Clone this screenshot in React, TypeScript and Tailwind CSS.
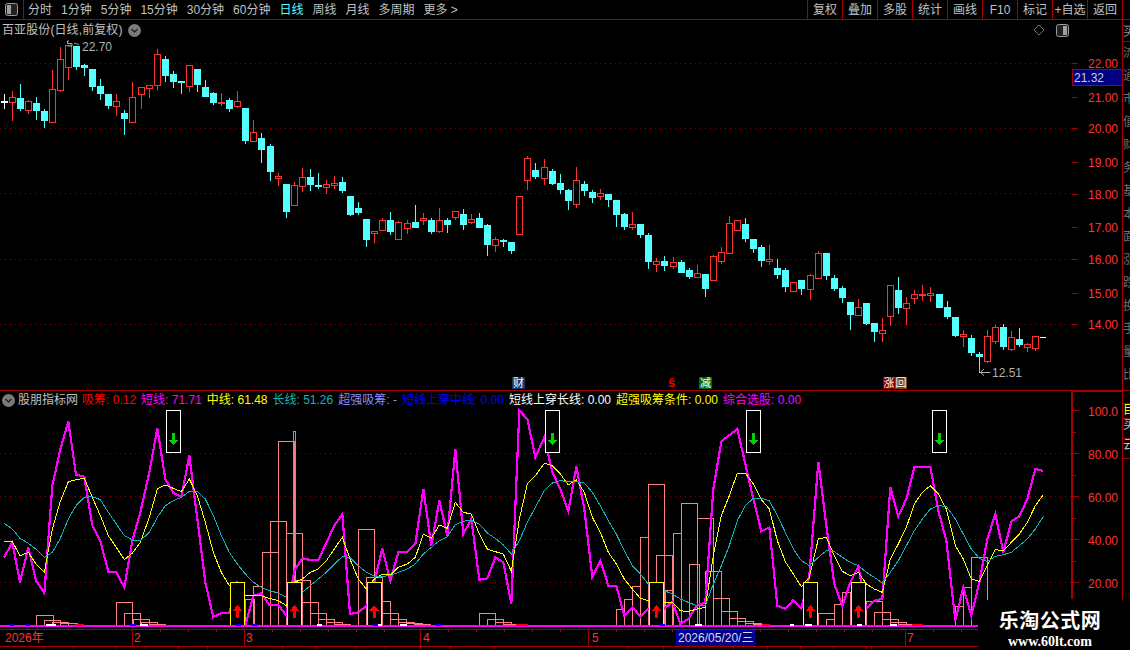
import clsx from "clsx";

const RED = "#ff3232";
const LINE = "#a80000";
const cjk = "font-['Liberation_Sans','Noto_Sans_CJK_SC',sans-serif]";

type C = [number, number, number, number, number];

// [red?, wick top, body top, body bottom, wick bottom], read off the picture in 3x units
const segA: C[] = [
  [2, 190, 213, 216, 233], [1, 180, 202, 215, 270], [0, 160, 205, 234, 240], [1, 208, 214, 240, 248],
  [0, 198, 220, 240, 267], [0, 235, 243, 270, 291], [1, 118, 178, 275, 275], [1, 48, 88, 179, 183],
  [1, 42, 46, 110, 147], [0, 47, 48, 108, 117], [0, 100, 105, 110, 135], [0, 117, 117, 168, 180],
  [0, 145, 168, 189, 207], [0, 189, 192, 225, 233], [1, 189, 214, 227, 255], [0, 238, 249, 264, 312],
  [1, 153, 202, 275, 275], [1, 171, 172, 191, 234], [1, 162, 166, 173, 201], [1, 54, 73, 164, 177],
  [0, 75, 87, 135, 153], [0, 120, 132, 153, 171], [0, 150, 153, 156, 189], [1, 102, 106, 167, 183],
  [0, 117, 117, 162, 183], [0, 147, 171, 198, 198], [0, 183, 189, 216, 222], [1, 186, 216, 219, 225],
  [0, 201, 210, 234, 243], [1, 180, 214, 227, 231], [0, 234, 234, 330, 339], [1, 267, 307, 333, 333],
  [0, 306, 324, 357, 396], [0, 339, 348, 423, 450], [1, 426, 438, 443, 465], [0, 460, 462, 543, 561],
  [1, 453, 466, 525, 525], [1, 411, 441, 467, 483], [0, 414, 441, 462, 480], [0, 426, 466, 469, 474],
  [1, 447, 463, 470, 489], [1, 435, 460, 464, 473], [0, 438, 456, 480, 486],
];
const segB: C[] = [
  [0, 135, 138, 192, 195], [0, 153, 174, 186, 192], [0, 204, 207, 267, 288], [1, 240, 243, 248, 276],
  [1, 201, 211, 240, 240], [0, 183, 210, 243, 252], [1, 210, 217, 267, 267], [1, 207, 220, 233, 249],
  [0, 162, 216, 231, 231], [1, 186, 204, 210, 222], [0, 201, 210, 243, 249], [1, 171, 211, 242, 246],
  [0, 201, 210, 222, 246], [1, 180, 184, 201, 207], [0, 174, 192, 222, 237], [1, 189, 208, 215, 219],
  [0, 186, 204, 231, 231], [0, 219, 225, 282, 315], [1, 258, 268, 285, 303], [0, 264, 270, 273, 288],
  [0, 273, 276, 300, 309], [1, 138, 139, 251, 252], [1, 15, 25, 89, 117], [0, 36, 60, 78, 84],
  [1, 24, 52, 83, 102], [0, 54, 63, 99, 102], [0, 69, 99, 117, 129], [0, 114, 120, 150, 177],
  [1, 48, 91, 161, 171], [0, 90, 102, 120, 135], [0, 117, 126, 141, 156], [1, 114, 130, 137, 147],
  [0, 129, 132, 147, 168], [0, 150, 150, 192, 228], [0, 186, 192, 228, 237], [1, 183, 223, 231, 237],
  [0, 219, 222, 252, 261], [0, 246, 255, 333, 354], [1, 321, 334, 341, 363], [0, 315, 333, 345, 360],
  [1, 318, 337, 347, 354], [0, 327, 336, 366, 366], [0, 351, 360, 378, 384], [1, 342, 370, 381, 381],
];
const segC: C[] = [
  [0, 222, 222, 264, 288], [1, 162, 169, 239, 240], [1, 138, 157, 182, 189], [1, 45, 70, 158, 159],
  [1, 61, 61, 89, 89], [0, 51, 72, 114, 123], [0, 117, 117, 144, 156], [0, 132, 141, 180, 198],
  [1, 132, 177, 182, 192], [0, 174, 204, 222, 234], [0, 201, 210, 258, 273], [1, 246, 246, 272, 272],
  [0, 240, 240, 264, 282], [1, 219, 226, 266, 297], [1, 150, 160, 233, 234], [0, 159, 159, 225, 237],
  [0, 222, 234, 264, 270], [0, 255, 264, 291, 306], [0, 306, 306, 342, 387], [1, 294, 322, 344, 345],
  [0, 309, 309, 369, 372], [0, 366, 369, 393, 423], [1, 351, 391, 398, 423], [1, 255, 256, 347, 375],
  [0, 228, 270, 321, 339], [1, 288, 310, 323, 372], [1, 267, 283, 293, 309], [1, 252, 282, 285, 300],
  [1, 258, 280, 285, 303], [0, 282, 282, 321, 321], [0, 300, 321, 348, 354], [0, 351, 351, 405, 408],
  [1, 387, 403, 408, 438], [0, 402, 414, 456, 465], [0, 453, 462, 468, 516], [1, 387, 408, 482, 486],
  [1, 372, 382, 423, 429], [0, 369, 381, 438, 447], [1, 390, 412, 446, 450], [0, 381, 417, 432, 438],
  [1, 426, 433, 442, 453], [1, 408, 409, 443, 450],
];

const candles = [
  ...segA.map((c) => ({ c, base: 30 })),
  ...segB.map((c) => ({ c, base: 150 })),
  ...segC.map((c) => ({ c, base: 200 })),
];

const drift = [17, 33, 50, 67, 83, 100, 116];
const candleX = (i: number) => 4.5 + 8 * i + drift.filter((d) => i >= d).length;
const py = (base: number, z: number) => Math.round(base + z / 3) + 0.5;

const Candles = () => (
  <g shapeRendering="crispEdges">
    {candles.map(({ c, base }, i) => {
      const [kind, wt, bt, bb, wb] = c;
      const x = candleX(i);
      const color = kind === 1 ? RED : kind === 2 ? "#ffffff" : "#54ffff";
      const top = py(base, bt);
      const bottom = py(base, bb);
      return (
        <g key={i}>
          <line x1={x} x2={x} y1={py(base, wt)} y2={py(base, wb)} stroke={color} />
          {kind === 1 ? (
            <rect x={x - 3} y={top} width={6} height={bottom - top} fill="#000" stroke={color} />
          ) : (
            <rect x={x - 3.5} y={top - 0.5} width={7} height={bottom - top + 1} fill={color} />
          )}
        </g>
      );
    })}
    <line x1={1040} x2={1046} y1={337.5} y2={337.5} stroke="#fff" />
  </g>
);

type P = [number, number];
const toPts = (base: number, pts: P[]) => pts.map(([x, y]) => `${base + x / 3},${410 + y / 3}`).join(" ");
const series = (a: P[], b: P[], c: P[]) => `${toPts(0, a)} ${toPts(350, b)} ${toPts(700, c)}`;

const magenta = series(
  [[12, 445], [37, 400], [60, 520], [85, 415], [108, 515], [133, 552], [157, 230], [180, 125], [205, 38], [228, 197], [253, 203], [277, 350], [301, 395], [325, 489], [349, 490], [373, 535], [397, 395], [421, 310], [448, 190], [472, 58], [496, 210], [520, 252], [544, 263], [568, 140], [592, 330], [616, 520], [640, 625], [664, 612], [688, 611], [712, 518], [736, 650], [760, 560], [784, 553], [808, 588], [835, 588], [859, 620], [883, 485], [907, 448], [931, 453], [955, 453], [1003, 350], [1027, 315], [1050, 615]],
  [[25, 610], [50, 590], [73, 520], [97, 418], [121, 515], [145, 430], [172, 428], [196, 405], [220, 240], [244, 410], [268, 275], [292, 380], [316, 120], [340, 375], [364, 330], [388, 512], [412, 508], [436, 445], [460, 460], [484, 585], [508, 5], [532, 30], [556, 145], [583, 85], [607, 190], [631, 240], [655, 307], [679, 173], [703, 300], [727, 505], [751, 455], [775, 530], [799, 530], [823, 620], [847, 595], [871, 622], [895, 600], [919, 610], [943, 600], [967, 577], [991, 645], [1015, 630], [1040, 590]],
  [[16, 580], [40, 240], [64, 97], [112, 60], [136, 165], [160, 270], [184, 367], [208, 355], [232, 590], [256, 600], [280, 573], [304, 598], [328, 500], [355, 158], [379, 350], [403, 525], [427, 590], [451, 520], [475, 472], [499, 600], [523, 575], [547, 570], [571, 235], [595, 322], [619, 270], [643, 175], [691, 173], [715, 305], [739, 395], [766, 635], [790, 535], [814, 620], [838, 520], [862, 390], [886, 315], [910, 430], [934, 337], [958, 322], [982, 270], [1006, 180], [1030, 186]],
);
const yellow = series(
  [[12, 398], [37, 398], [60, 440], [85, 430], [108, 465], [133, 490], [157, 360], [180, 280], [205, 218], [228, 212], [253, 208], [277, 265], [301, 320], [325, 380], [349, 415], [373, 452], [397, 432], [421, 400], [448, 325], [472, 240], [496, 228], [520, 238], [544, 248], [568, 210], [592, 260], [616, 340], [640, 430], [664, 490], [688, 530], [736, 558], [760, 558], [784, 560], [808, 568], [835, 575], [859, 590], [883, 520], [907, 510], [931, 490], [955, 480], [979, 455], [1003, 420], [1027, 385], [1050, 450]],
  [[25, 510], [49, 540], [73, 510], [97, 495], [121, 498], [145, 475], [172, 465], [196, 445], [220, 375], [244, 387], [268, 348], [292, 358], [316, 280], [340, 310], [364, 315], [388, 375], [412, 420], [436, 428], [460, 435], [484, 487], [508, 330], [532, 225], [556, 200], [583, 163], [607, 170], [631, 195], [655, 228], [679, 212], [703, 250], [727, 325], [751, 370], [775, 430], [799, 465], [823, 510], [847, 540], [871, 568], [895, 575], [919, 575], [943, 580], [967, 580], [991, 605], [1015, 608], [1040, 600]],
  [[16, 595], [40, 440], [64, 320], [88, 260], [112, 193], [136, 193], [160, 225], [184, 272], [208, 300], [232, 395], [256, 458], [280, 495], [304, 533], [328, 505], [355, 390], [379, 385], [403, 440], [427, 487], [451, 500], [475, 490], [499, 525], [523, 540], [547, 550], [571, 450], [595, 405], [619, 355], [643, 285], [667, 250], [691, 230], [715, 255], [739, 300], [766, 410], [790, 450], [814, 510], [838, 517], [862, 470], [886, 422], [910, 425], [934, 400], [958, 375], [982, 340], [1006, 290], [1030, 257]],
);
const teal = series(
  [[12, 343], [37, 360], [60, 388], [85, 403], [108, 420], [133, 445], [157, 430], [180, 390], [205, 330], [228, 290], [253, 265], [277, 263], [301, 272], [325, 310], [349, 345], [373, 380], [397, 393], [421, 395], [448, 370], [472, 325], [496, 290], [520, 275], [544, 265], [568, 247], [592, 247], [616, 270], [640, 320], [664, 380], [688, 430], [712, 465], [736, 495], [760, 520], [784, 535], [808, 545], [835, 552], [859, 565], [883, 550], [907, 550], [931, 530], [955, 510], [979, 490], [1003, 465], [1027, 443], [1050, 445]],
  [[25, 470], [49, 490], [73, 502], [97, 502], [121, 500], [145, 490], [172, 480], [196, 465], [220, 435], [244, 415], [268, 395], [292, 383], [316, 347], [340, 337], [364, 333], [388, 345], [412, 372], [436, 388], [460, 408], [484, 435], [508, 395], [532, 340], [556, 295], [583, 245], [607, 222], [631, 215], [655, 218], [679, 218], [703, 222], [727, 250], [751, 290], [775, 335], [799, 375], [823, 425], [847, 470], [871, 495], [895, 525], [919, 535], [943, 545], [967, 555], [991, 570], [1015, 580], [1040, 590]],
  [[16, 590], [40, 525], [64, 470], [88, 410], [112, 335], [136, 290], [160, 268], [184, 268], [208, 275], [232, 320], [256, 370], [280, 420], [304, 455], [328, 470], [355, 445], [379, 425], [403, 428], [427, 445], [451, 460], [475, 470], [499, 490], [523, 505], [547, 522], [571, 490], [595, 455], [619, 410], [643, 365], [667, 330], [691, 300], [715, 290], [739, 292], [766, 330], [790, 375], [814, 420], [838, 448], [862, 458], [886, 442], [910, 437], [934, 430], [958, 410], [982, 390], [1006, 360], [1030, 322]],
);

// salmon outline bars: [page base, left, right, top]
const bars: [number, number, number, number][] = [
  [0, 108, 158, 618], [0, 133, 182, 634], [0, 157, 206, 640], [0, 180, 230, 643],
  [0, 349, 398, 580], [0, 373, 422, 613], [0, 400, 448, 630], [0, 424, 472, 640], [0, 448, 496, 645],
  [0, 734, 760, 571], [0, 760, 788, 530], [0, 787, 835, 430], [0, 811, 859, 337], [0, 835, 883, 97],
  [0, 859, 907, 373], [0, 883, 931, 512], [0, 907, 955, 580], [0, 931, 979, 613], [0, 955, 1003, 631],
  [0, 979, 1027, 640], [0, 1003, 1050, 645],
  [350, 25, 73, 361], [350, 49, 97, 505], [350, 73, 121, 577], [350, 97, 145, 613], [350, 121, 169, 631],
  [350, 145, 193, 640], [350, 169, 217, 643], [350, 193, 241, 646],
  [350, 388, 436, 613], [350, 412, 460, 631], [350, 436, 484, 640], [350, 460, 508, 645],
  [350, 799, 823, 600], [350, 823, 847, 571], [350, 847, 871, 532], [350, 871, 895, 385], [350, 895, 943, 226],
  [350, 919, 967, 439], [350, 970, 994, 373], [350, 945, 970, 544], [350, 994, 1042, 283], [350, 1018, 1048, 466], [350, 1042, 1090, 328],
  [700, 16, 64, 487], [700, 40, 88, 568], [700, 64, 112, 607], [700, 88, 136, 628], [700, 112, 160, 637],
  [700, 136, 184, 643], [700, 160, 208, 646],
  [700, 355, 403, 613], [700, 379, 403, 631], [700, 403, 427, 586], [700, 427, 451, 550], [700, 451, 499, 600],
  [700, 499, 547, 575], [700, 523, 571, 610], [700, 547, 595, 631], [700, 571, 619, 640], [700, 595, 643, 645], [700, 619, 667, 646],
  [700, 766, 790, 590], [700, 790, 814, 535], [700, 814, 862, 445],
];

const upBoxes = [230, 287, 366.5, 649, 803, 851];
const downBoxes = [166, 545, 746, 932];

const ticks: [string, number, number][] = [
  ["#0000ff", 10, 14], ["#0000ff", 26, 30], ["#ff0000", 75, 84], ["#ffffff", 46, 56], ["#ffffff", 140, 148], ["#0000ff", 130, 136],
  ["#0000ff", 236, 241], ["#0000ff", 252, 257], ["#ffffff", 317, 322], ["#ffffff", 375, 382], ["#0000ff", 373, 378], ["#0000ff", 436, 441],
  ["#ffffff", 400, 407], ["#ffffff", 518, 522], ["#ff0000", 516, 528], ["#0000ff", 660, 665], ["#ffffff", 695, 702], ["#ffffff", 805, 812],
  ["#ffffff", 857, 862], ["#ffffff", 890, 897], ["#ff0000", 912, 923], ["#ffffff", 790, 794], ["#ff0000", 762, 770],
];

const UpperChart = () => (
  <svg width={1071} height={371} viewBox="0 20 1071 371" className="absolute left-0 top-0">
    {[63.5, 128.5, 193.5, 259.5, 324.5].map((y) => (
      <line key={y} x1={0} x2={1071} y1={y} y2={y} stroke="#900000" strokeDasharray="1 4" shapeRendering="crispEdges" />
    ))}
    <Candles />
    <g stroke="#b0b0b0" fill="none">
      <path d="M69 41h-1.5v2.5h4.5v2.5h-4.5M74 44c2-2 3 1 5 0" />
      <path d="M979.5 366v6.5h11M984 369l-3.5 3.5 3.5 3" />
    </g>
  </svg>
);

const LowerChart = () => (
  <svg width={1071} height={238} viewBox="0 392 1071 238" className="absolute left-0 top-0">
    {[454.5, 497.5, 540.5, 583.5].map((y) => (
      <line key={y} x1={0} x2={1071} y1={y} y2={y} stroke="#900000" strokeDasharray="1 4" shapeRendering="crispEdges" />
    ))}
    <g shapeRendering="crispEdges" fill="none">
      {bars.map(([base, l, r, top], i) => (
        <rect key={i} x={Math.round(base + l / 3) + 0.5} y={Math.round(410 + top / 3) + 0.5} width={Math.round((r - l) / 3)} height={Math.max(1, 626 - Math.round(410 + top / 3))} stroke="#ff8080" />
      ))}
      <rect x={293.5} y={432.5} width={2} height={194} stroke="#8c8cff" />
      <polyline points={magenta} stroke="#ff00ff" strokeWidth={2.2} />
      <polyline points={yellow} stroke="#ffff00" />
      <polyline points={teal} stroke="#14b4b4" />
      {upBoxes.map((x) => (
        <g key={x}>
          <rect x={x + 0.5} y={583.5} width={14} height={43} fill="#000" stroke="#ffff00" />
          <path d={`M${x + 7.5} 606l-5 6h3.5v6.5h3v-6.5h3.5z`} fill="#ff0000" />
        </g>
      ))}
      {downBoxes.map((x) => (
        <g key={x}>
          <rect x={x + 0.5} y={411.5} width={14} height={42} fill="#000" stroke="#ffffff" />
          <path d={`M${x + 6} 434h3v6.5h3.5l-5 6-5-6h3.5z`} fill="#00d200" />
        </g>
      ))}
      <line x1={0} x2={1071} y1={626.5} y2={626.5} stroke="#ff00ff" strokeWidth={2} />
      {ticks.map(([color, a, b], i) => (
        <line key={i} x1={a} x2={b} y1={625.5} y2={625.5} stroke={color} strokeWidth={2} />
      ))}
    </g>
  </svg>
);

const ChevronCircle = () => (
  <svg width={13} height={13} viewBox="0 0 13 13" className="shrink-0">
    <circle cx={6.5} cy={6.5} r={6.5} fill="#7a7a7a" />
    <path d="M3.5 5l3 3 3-3" fill="none" stroke="#222" strokeWidth={1.4} />
  </svg>
);

const HalfBox = ({ fillLeft }: { fillLeft?: boolean }) => (
  <svg width={13} height={13} viewBox="0 0 13 13" className="shrink-0">
    <rect x={0.5} y={0.5} width={12} height={12} rx={2} fill="#222" stroke="#9a9a9a" />
    <rect x={fillLeft ? 2 : 7} y={2} width={4} height={9} fill="#a0a0a0" />
  </svg>
);

const upperLabels: [string, number][] = [
  ["22.00", 63], ["21.00", 97], ["20.00", 128], ["19.00", 162], ["18.00", 194],
  ["17.00", 227], ["16.00", 259], ["15.00", 293], ["14.00", 324],
];
const lowerLabels: [string, number][] = [["100.0", 412], ["80.00", 455], ["60.00", 498], ["40.00", 541], ["20.00", 584]];

const UpperAxis = () => (
  <svg width={51} height={371} viewBox="1071 20 51 371" className="block">
    {upperLabels.map(([t, y]) => (
      <g key={t}>
        <line x1={1072} x2={1078} y1={y + 0.5} y2={y + 0.5} stroke={LINE} shapeRendering="crispEdges" />
        <text x={1118} y={y + 4.5} textAnchor="end" fill={RED} fontSize={12} className={cjk}>{t}</text>
      </g>
    ))}
    <rect x={1072.5} y={69.5} width={50} height={16} fill="#000080" stroke={LINE} shapeRendering="crispEdges" />
    <text x={1074} y={81.5} fill="#c8c8e8" fontSize={12} className={cjk}>21.32</text>
  </svg>
);

const LowerAxis = () => (
  <svg width={51} height={208} viewBox="1071 392 51 208" className="block">
    <line x1={1072} x2={1072} y1={392} y2={600} stroke={LINE} strokeWidth={2} shapeRendering="crispEdges" />
    <line x1={1071} x2={1122} y1={392.5} y2={392.5} stroke={LINE} shapeRendering="crispEdges" />
    {lowerLabels.map(([t, y]) => (
      <g key={t}>
        <line x1={1073} x2={1079} y1={y - 0.5} y2={y - 0.5} stroke={LINE} shapeRendering="crispEdges" />
        <line x1={1073} x2={1076} y1={y + 21} y2={y + 21} stroke={LINE} shapeRendering="crispEdges" />
        <text x={1118} y={y + 4.5} textAnchor="end" fill={RED} fontSize={12} className={cjk}>{t}</text>
      </g>
    ))}
  </svg>
);

const DateAxis = () => (
  <svg width={1071} height={20} viewBox="0 630 1071 20" className="block">
    <g shapeRendering="crispEdges" stroke={LINE}>
      <line x1={0} x2={1071} y1={630.5} y2={630.5} />
      <line x1={0} x2={1071} y1={647.5} y2={647.5} />
      {[132, 244, 420, 588, 905].map((x) => (
        <line key={x} x1={x + 0.5} x2={x + 0.5} y1={630} y2={647} />
      ))}
      {[160, 188, 216, 272, 300, 328, 356, 384, 448, 476, 504, 532, 560, 616, 644, 672, 760, 788, 816, 844, 872, 933, 961].map((x) => (
        <line key={x} x1={x + 0.5} x2={x + 0.5} y1={630} y2={633} />
      ))}
      {[43, 73, 115, 145, 178, 207, 241, 282, 316, 356, 385, 420, 450, 494, 628, 663, 699, 733, 767, 800, 833, 866, 871].map((x) => (
        <line key={x} x1={x + 0.5} x2={x + 0.5} y1={647} y2={650} />
      ))}
    </g>
    <g fill={RED} fontSize={12} className={cjk}>
      <text x={5} y={643}>2026年</text>
      <text x={134} y={643}>2</text>
      <text x={246} y={643}>3</text>
      <text x={423} y={643}>4</text>
      <text x={592} y={643}>5</text>
      <text x={907} y={643}>7</text>
    </g>
    <rect x={676.5} y={631.5} width={78} height={15} fill="#000080" stroke="#0000c0" shapeRendering="crispEdges" />
    <text x={678} y={643} fill="#d8d8ff" fontSize={12} className={cjk}>2026/05/20/三</text>
  </svg>
);

const Legend = ({ label, value, color }: { label: string; value: string; color: string }) => (
  <span className={clsx("whitespace-nowrap", color)}>
    {label}: {value}
  </span>
);

const Toolbar = () => (
  <div className="flex h-[20px] shrink-0 items-center border-b border-[#a80000] text-[12px] text-[#c0c0c0]">
    <div className="flex h-full w-[24px] shrink-0 items-center justify-center border-r border-[#a80000]">
      <HalfBox fillLeft />
    </div>
    <div className="ml-[4px] flex gap-[9px]">
      {["分时", "1分钟", "5分钟", "15分钟", "30分钟", "60分钟"].map((t) => (
        <span key={t}>{t}</span>
      ))}
      <span className="text-[#54ffff]">日线</span>
      {["周线", "月线", "多周期", "更多 >"].map((t) => (
        <span key={t}>{t}</span>
      ))}
    </div>
    <div className="ml-auto flex h-full">
      {["复权", "叠加", "多股", "统计", "画线", "F10", "标记", "+自选", "返回"].map((t) => (
        <span key={t} className="flex h-full w-[35px] items-center justify-center whitespace-nowrap border-l border-[#a80000]">
          {t}
        </span>
      ))}
      <span className="w-[8px] border-l border-[#a80000]" />
    </div>
  </div>
);

// clipped column at the right edge of the window, only the left part of each glyph shows
const SideColumn = ({ rows }: { rows: { h: number; text: string; color: string; leading: string }[] }) => (
  <div className="flex-1 overflow-hidden border-l border-[#a80000]">
    {rows.map((r, i) => (
      <div key={i} className={clsx("overflow-hidden border-b border-[#a80000] text-[12px]", r.leading, r.color)} style={{ height: r.h }}>
        {r.text}
      </div>
    ))}
  </div>
);

const topSide = [
  { h: 6, text: "", color: "", leading: "leading-[13px]" },
  { h: 16, text: "买", color: "text-[#909090]", leading: "leading-[13px]" },
  { h: 349, text: "流通市值财务基本面涨跌换手量比", color: "text-[#707070]", leading: "leading-[23px]" },
];
const bottomSide = [
  { h: 13, text: "", color: "", leading: "leading-[13px]" },
  { h: 15, text: "目", color: "text-[#ffff00]", leading: "leading-[13px]" },
  { h: 20, text: "买", color: "text-[#c0c0c0]", leading: "leading-[13px]" },
  { h: 20, text: "云", color: "text-[#c0c0c0]", leading: "leading-[13px]" },
];

export default function App() {
  return (
    <div className={clsx("relative flex h-[650px] w-[1130px] flex-col overflow-hidden bg-black", cjk)}>
      <Toolbar />
      <div className="flex h-[371px] shrink-0 border-b border-[#a80000]">
        <div className="relative h-[371px] w-[1071px] shrink-0">
          <UpperChart />
          <div className="relative flex h-[20px] items-center gap-[5px] pl-[2px] text-[12px] text-[#c0c0c0]">
            <span className="tracking-[0.1px]">百亚股份(日线,前复权)</span>
            <ChevronCircle />
            <svg width={12} height={12} viewBox="0 0 12 12" className="ml-auto">
              <path d="M6 1l5 5-5 5-5-5z" fill="none" stroke="#777" />
            </svg>
            <div className="ml-[6px] mr-[2px]">
              <HalfBox />
            </div>
          </div>
          <span className="absolute left-[82px] top-[18px] text-[12px] text-[#b0b0b0]">22.70</span>
          <span className="absolute left-[992px] top-[344px] text-[12px] text-[#b0b0b0]">12.51</span>
          <span className="absolute left-[512px] top-[357px] flex h-[12px] w-[13px] items-center justify-center bg-[#0a3a6a] text-[11px] text-white">财</span>
          <span className="absolute left-[668px] top-[356px] text-[13px] font-bold leading-[14px] text-[#ff0000]">ŝ</span>
          <span className="absolute left-[699px] top-[357px] flex h-[12px] w-[13px] items-center justify-center bg-[#006a10] text-[11px] text-white">减</span>
          <span className="absolute left-[883px] top-[357px] flex h-[12px] w-[12px] items-center justify-center bg-[#800000] text-[11px] text-white">涨</span>
          <span className="absolute left-[895px] top-[357px] flex h-[12px] w-[12px] items-center justify-center bg-[#804000] text-[11px] text-white">回</span>
        </div>
        <div className="w-[51px] shrink-0">
          <UpperAxis />
        </div>
        <SideColumn rows={topSide} />
      </div>
      <div className="flex min-h-0 flex-1">
        <div className="flex w-[1071px] shrink-0 flex-col">
          <div className="relative h-[238px] shrink-0">
            <LowerChart />
            <div className="relative flex h-[18px] items-center gap-[5px] pl-[2px] text-[12px] whitespace-nowrap">
              <ChevronCircle />
              <span className="ml-[-2px] mr-[-1px] text-[#c0c0c0]">股朋指标网</span>
              <Legend label="吸筹" value="0.12" color="text-[#ff0000]" />
              <Legend label="短线" value="71.71" color="text-[#ff00ff]" />
              <Legend label="中线" value="61.48" color="text-[#ffff00]" />
              <Legend label="长线" value="51.26" color="text-[#14b4b4]" />
              <Legend label="超强吸筹" value="-" color="text-[#8c8cff]" />
              <Legend label="短线上穿中线" value="0.00" color="text-[#0000ff]" />
              <Legend label="短线上穿长线" value="0.00" color="text-white" />
              <Legend label="超强吸筹条件" value="0.00" color="text-[#ffff00]" />
              <Legend label="综合选股" value="0.00" color="text-[#ff00ff]" />
            </div>
          </div>
          <DateAxis />
        </div>
        <div className="w-[51px] shrink-0">
          <LowerAxis />
        </div>
        <SideColumn rows={bottomSide} />
      </div>
      {/* watermark sits over the corner of the chart */}
      <div className="absolute bottom-0 right-0 flex h-[50px] w-[152px] flex-col items-center bg-black pr-[8px] pt-[9px] text-white">
        <span className="text-[20px] font-bold leading-[24px] tracking-[0.5px]">乐淘公式网</span>
        <span className="font-['Liberation_Serif',serif] text-[14px] font-bold leading-[17px]">www.60lt.com</span>
      </div>
    </div>
  );
}
